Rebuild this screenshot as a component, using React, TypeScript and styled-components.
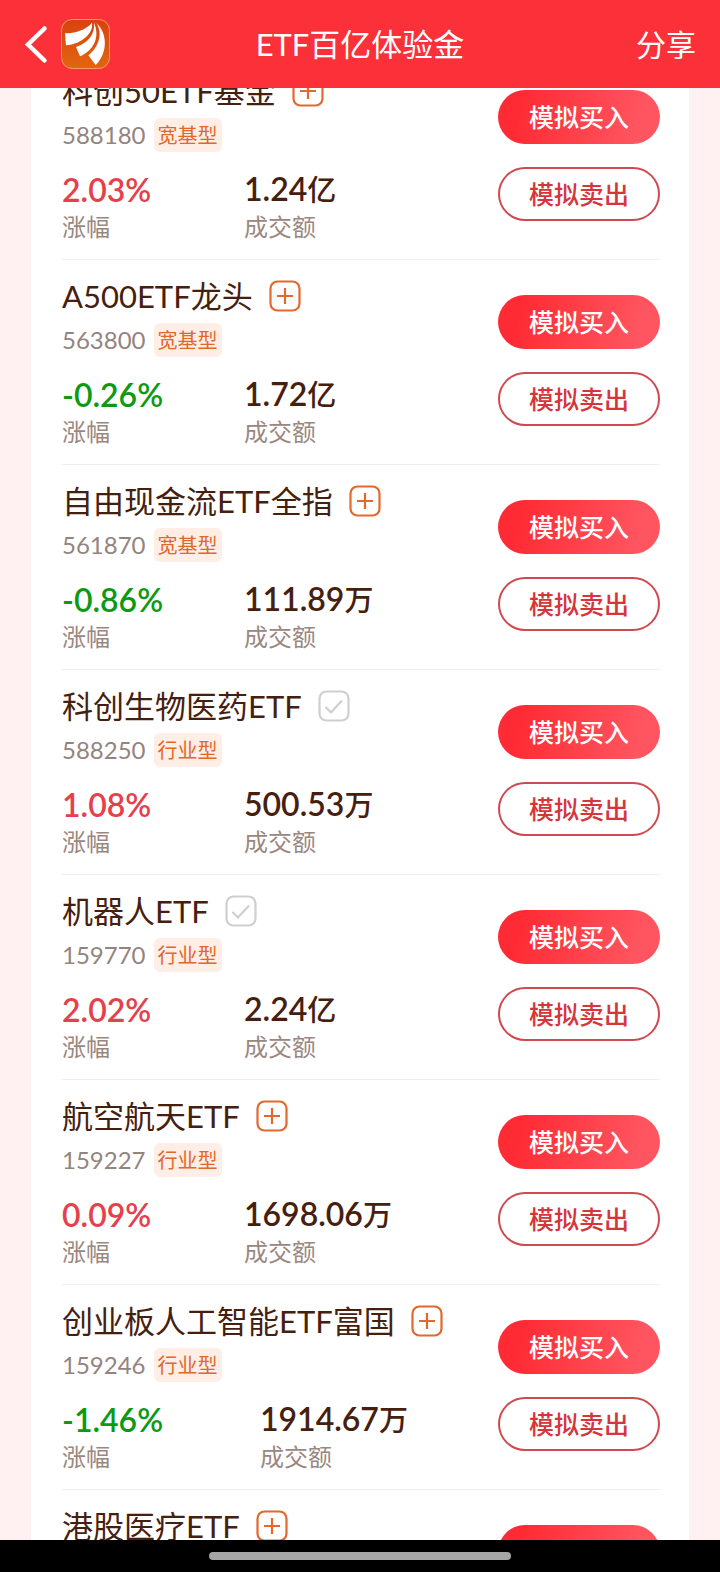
import React from 'react';
import styled, { createGlobalStyle, css } from 'styled-components';

const GlobalStyle = createGlobalStyle`
  * { box-sizing: border-box; }
  body {
    margin: 0;
    background: #fff0f1;
    font-family: Lato, "Noto Sans CJK SC", sans-serif;
    color: #46200f;
  }
  button {
    font: inherit;
    border: 0;
    padding: 0;
    background: none;
    cursor: pointer;
  }
  h1, h2, p, dl, dd, dt, ul { margin: 0; padding: 0; font-weight: 400; }
`;

const Screen = styled.div`
  display: flex;
  flex-direction: column;
  height: 100vh;
  overflow: hidden;
`;

const Header = styled.header`
  display: grid;
  grid-template-columns: 1fr auto 1fr;
  align-items: center;
  flex: none;
  height: 88px;
  padding: 0 24px;
  background: #fb3038;
  color: #fff;
`;

const HeaderStart = styled.div`
  display: flex;
  align-items: center;
  gap: 13px;
`;

const HeaderTitle = styled.h1`
  font-size: 31px;
  line-height: 40px;
`;

const BackButton = styled.button`
  display: flex;
  color: #fff;
`;

const ShareButton = styled.button`
  justify-self: end;
  color: #fff;
  font-size: 30px;
  line-height: 40px;
`;

const Viewport = styled.main`
  flex: 1;
  min-height: 0;
  overflow: hidden;
  padding: 0 31px;
`;

const FundList = styled.ul`
  margin-top: -33px;
  padding: 0 29px 0 31px;
  background: #fff;
  list-style: none;
`;

const FundRow = styled.li`
  display: flex;
  align-items: flex-start;
  justify-content: space-between;
  padding: 20px 0 18px;
  border-bottom: 1px solid #efefef;
`;

const FundInfo = styled.div`
  flex: 1;
`;

const TitleLine = styled.div`
  display: flex;
  align-items: center;
  gap: 16px;
  height: 32px;
`;

const FundName = styled.h2`
  font-size: 31px;
  line-height: 32px;
  white-space: nowrap;
`;

const WatchButton = styled.button<{ $added?: boolean }>`
  display: flex;
  color: ${(p) => (p.$added ? '#cfcfcf' : '#e2682c')};
`;

const CodeLine = styled.div`
  display: flex;
  align-items: center;
  gap: 8px;
  margin-top: 11px;
`;

const Code = styled.span`
  color: #938480;
  font-size: 24px;
  line-height: 34px;
`;

const Tag = styled.span`
  padding: 0 4px;
  border-radius: 6px;
  background: #ffeee6;
  color: #e0682a;
  font-size: 20px;
  line-height: 34px;
`;

const Stats = styled.dl<{ $wide?: boolean }>`
  display: grid;
  grid-template-columns: ${(p) => (p.$wide ? '198px' : '182px')} auto;
  justify-content: start;
  margin-top: 19px;
`;

const Stat = styled.div`
  display: flex;
  flex-direction: column-reverse;
  gap: 5px;
`;

const StatLabel = styled.dt`
  color: #9a8780;
  font-size: 24px;
  line-height: 28px;
`;

const StatValue = styled.dd<{ $tone?: 'up' | 'down' }>`
  color: ${(p) => (p.$tone === 'up' ? '#e5404b' : p.$tone === 'down' ? '#0c9a14' : '#46200f')};
  font-size: 32px;
  font-weight: 600;
  line-height: 36px;
  white-space: nowrap;
`;

const Unit = styled.span`
  font-size: 29px;
  font-weight: 500;
`;

const Actions = styled.div`
  display: flex;
  flex-direction: column;
  gap: 23px;
  margin-top: 15px;
`;

const TradeButton = styled.button<{ $kind: 'buy' | 'sell' }>`
  width: 162px;
  height: 54px;
  border-radius: 27px;
  font-size: 25px;
  font-weight: 500;
  line-height: 32px;
  ${(p) =>
    p.$kind === 'buy'
      ? css`
          background: linear-gradient(105deg, #ff2b34 15%, #ff5560 85%);
          color: #fff;
        `
      : css`
          border: 2px solid #cf4a50;
          background: #fff;
          color: #d5353b;
        `}
`;

const GestureArea = styled.footer`
  display: flex;
  align-items: center;
  justify-content: center;
  flex: none;
  height: 32px;
  background: #000;
`;

const GestureBar = styled.div`
  width: 42%;
  height: 8px;
  border-radius: 4px;
  background: #a6a6a6;
`;

const BackIcon = () => (
  <svg width="24" height="40" viewBox="0 0 24 40" fill="none" aria-hidden="true">
    <path d="M20.500 4.500L4 20.500L20.500 36.500" stroke="currentColor" strokeWidth="4.500" strokeLinecap="round" />
  </svg>
);

const BrandLogo = () => (
  <svg width="49" height="50" viewBox="0 0 147 150" role="img" aria-label="Logo">
    <defs>
      <linearGradient id="brand" x1="0" y1="0" x2="0" y2="1">
        <stop offset="0" stopColor="#d8420f" />
        <stop offset="1" stopColor="#e3660f" />
      </linearGradient>
    </defs>
    <rect x="1.500" y="1.500" width="144" height="147" rx="32" fill="url(#brand)" stroke="#f79a6c" strokeWidth="3" />
    <g fill="#fff">
      <path d="M12 43C42 42 74 34 93 11C98 42 64 74 15 79Z" />
      <path d="M99 11C103 44 82 71 45 84L57 112C98 94 118 54 99 11Z" />
      <path d="M106 11C126 44 114 84 82 109L104 138C137 106 144 48 106 11Z" />
    </g>
  </svg>
);

const WatchIcon = ({ added }: { added?: boolean }) => (
  <svg width="32" height="32" viewBox="0 0 32 32" fill="none" stroke="currentColor" strokeWidth="2.200" aria-hidden="true">
    <rect x="1.500" y="1.500" width="29" height="29" rx="7" />
    {added ? <path d="M7.500 17L13 22.500L24 10.500" /> : <path d="M16 8V24M8 16H24" />}
  </svg>
);

interface Fund {
  name: string;
  code?: string;
  type?: string;
  change?: string;
  amount?: string;
  unit?: string;
  added?: boolean;
  wide?: boolean;
}

const funds: Fund[] = [
  { name: '科创50ETF基金', code: '588180', type: '宽基型', change: '2.03%', amount: '1.24', unit: '亿' },
  { name: 'A500ETF龙头', code: '563800', type: '宽基型', change: '-0.26%', amount: '1.72', unit: '亿' },
  { name: '自由现金流ETF全指', code: '561870', type: '宽基型', change: '-0.86%', amount: '111.89', unit: '万' },
  { name: '科创生物医药ETF', code: '588250', type: '行业型', change: '1.08%', amount: '500.53', unit: '万', added: true },
  { name: '机器人ETF', code: '159770', type: '行业型', change: '2.02%', amount: '2.24', unit: '亿', added: true },
  { name: '航空航天ETF', code: '159227', type: '行业型', change: '0.09%', amount: '1698.06', unit: '万' },
  { name: '创业板人工智能ETF富国', code: '159246', type: '行业型', change: '-1.46%', amount: '1914.67', unit: '万', wide: true },
  { name: '港股医疗ETF' },
];

const FundItem = ({ fund }: { fund: Fund }) => (
  <FundRow>
    <FundInfo>
      <TitleLine>
        <FundName>{fund.name}</FundName>
        <WatchButton $added={fund.added} aria-pressed={!!fund.added} aria-label="自选">
          <WatchIcon added={fund.added} />
        </WatchButton>
      </TitleLine>
      {fund.code && (
        <CodeLine>
          <Code>{fund.code}</Code>
          <Tag>{fund.type}</Tag>
        </CodeLine>
      )}
      {fund.change && (
        <Stats $wide={fund.wide}>
          <Stat>
            <StatLabel>涨幅</StatLabel>
            <StatValue $tone={fund.change.startsWith('-') ? 'down' : 'up'}>{fund.change}</StatValue>
          </Stat>
          <Stat>
            <StatLabel>成交额</StatLabel>
            <StatValue>
              {fund.amount}
              <Unit>{fund.unit}</Unit>
            </StatValue>
          </Stat>
        </Stats>
      )}
    </FundInfo>
    <Actions>
      <TradeButton $kind="buy">模拟买入</TradeButton>
      <TradeButton $kind="sell">模拟卖出</TradeButton>
    </Actions>
  </FundRow>
);

export default function App() {
  return (
    <Screen>
      <GlobalStyle />
      <Header>
        <HeaderStart>
          <BackButton aria-label="返回">
            <BackIcon />
          </BackButton>
          <BrandLogo />
        </HeaderStart>
        <HeaderTitle>ETF百亿体验金</HeaderTitle>
        <ShareButton>分享</ShareButton>
      </Header>
      <Viewport>
        <FundList>
          {funds.map((fund) => (
            <FundItem key={fund.name} fund={fund} />
          ))}
        </FundList>
      </Viewport>
      <GestureArea>
        <GestureBar />
      </GestureArea>
    </Screen>
  );
}
